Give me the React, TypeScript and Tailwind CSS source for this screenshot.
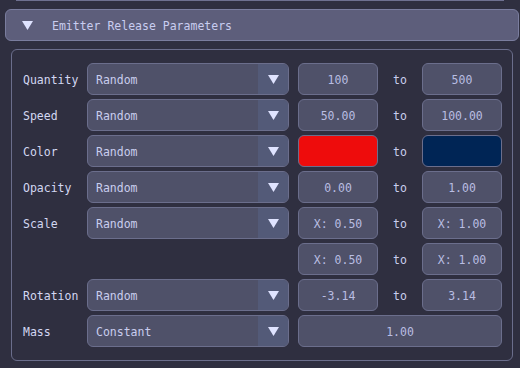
import { useState } from "react";

type Row = {
  label?: string;
  mode?: string;
  from?: string;
  to?: string;
  single?: string;
  fromColor?: string;
  toColor?: string;
};

const ROWS: Row[] = [
  { label: "Quantity", mode: "Random", from: "100", to: "500" },
  { label: "Speed", mode: "Random", from: "50.00", to: "100.00" },
  { label: "Color", mode: "Random", fromColor: "bg-[#ee0c0c]", toColor: "bg-[#002555]" },
  { label: "Opacity", mode: "Random", from: "0.00", to: "1.00" },
  { label: "Scale", mode: "Random", from: "X: 0.50", to: "X: 1.00" },
  { from: "X: 0.50", to: "X: 1.00" },
  { label: "Rotation", mode: "Random", from: "-3.14", to: "3.14" },
  { label: "Mass", mode: "Constant", single: "1.00" },
];

function Arrow() {
  return (
    <svg width="11" height="9" viewBox="0 0 11 9" aria-hidden>
      <path d="M0 0 H11 L5.5 9 Z" fill="#dfe3ff" />
    </svg>
  );
}

function Select({ value }: { value: string }) {
  return (
    <div className="w-[202px] h-8 flex rounded-[6px] border border-[#6b6e8c] bg-[#4f5169] overflow-hidden">
      <div className="flex-1 flex items-center pl-2 pt-[3px] text-[#c9cdee]">{value}</div>
      <div className="w-[30px] flex items-center justify-center bg-[#535a78]">
        <Arrow />
      </div>
    </div>
  );
}

function Box({ children, color }: { children?: React.ReactNode; color?: string }) {
  return (
    <div
      className={`w-[80px] h-8 flex items-center justify-center pt-[3px] rounded-[6px] border border-[#6b6e8c] ${color ?? "bg-[#4f5169]"} text-[#b9bde2]`}
    >
      {children}
    </div>
  );
}

export default function App() {
  const [open, setOpen] = useState(true);

  return (
    <div
      className="w-[520px] h-[368px] bg-[#2f2f40] overflow-hidden text-[11.5px]"
      style={{ fontFamily: '"DejaVu Sans Mono", "Liberation Mono", monospace' }}
    >
      {/* bottom edge of the panel above */}
      <div className="mx-[16px] h-px bg-[#6e7090]" />

      {/* Section header */}
      <button
        type="button"
        onClick={() => setOpen(!open)}
        className="mt-2 ml-[5px] w-[514px] h-8 flex items-center rounded-[6px] border border-[#7a7d9e] bg-[#5d5e7b] text-[#c9cdf0]"
      >
        <span className="ml-[16px] w-[11px] flex">
          <Arrow />
        </span>
        <span className="ml-[19px] pt-[3px]">Emitter Release Parameters</span>
      </button>

      {open && (
        <div className="mt-2 ml-[11px] w-[502px] rounded-[6px] border border-[#6b6e8c] pt-[13px] pb-[13px] pl-[11px] flex flex-col gap-1">
          {ROWS.map((r, i) => (
            <div key={i} className="flex items-center h-8">
              <div className="w-[64px] pt-[3px] text-[#d3d7f2]">{r.label}</div>
              <div className="w-[211px]">{r.mode && <Select value={r.mode} />}</div>
              {r.single ? (
                <div className="w-[204px] h-8 flex items-center justify-center pt-[3px] rounded-[6px] border border-[#6b6e8c] bg-[#4f5169] text-[#b9bde2]">
                  {r.single}
                </div>
              ) : (
                <>
                  <Box color={r.fromColor}>{r.from}</Box>
                  <div className="w-[44px] pt-[3px] text-center text-[#c9cdee]">to</div>
                  <Box color={r.toColor}>{r.to}</Box>
                </>
              )}
            </div>
          ))}
        </div>
      )}
    </div>
  );
}
